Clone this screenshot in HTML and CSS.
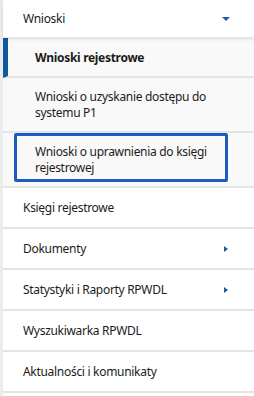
FILE: index.html
```html
<!DOCTYPE html>
<html lang="pl">
<head>
  <meta charset="UTF-8">
  <meta name="viewport" content="width=device-width, initial-scale=1.0">
  <title>Menu</title>
  <link rel="stylesheet" href="styles.css">
</head>
<body>
  <nav class="menu">
    <div class="menu-head">
      <span>Wnioski</span>
      <span class="caret-down"></span>
    </div>
    <ul class="sub-list">
      <li class="sub-item active">Wnioski rejestrowe</li>
      <li class="sub-item">Wnioski o uzyskanie dostępu do systemu P1</li>
      <li class="sub-item focus-row"><a class="focus-link" href="#">Wnioski o uprawnienia do księgi rejestrowej</a></li>
    </ul>
    <ul class="top-list">
      <li class="top-item">Księgi rejestrowe</li>
      <li class="top-item">Dokumenty <span class="caret-right"></span></li>
      <li class="top-item">Statystyki i Raporty RPWDL <span class="caret-right"></span></li>
      <li class="top-item">Wyszukiwarka RPWDL</li>
      <li class="top-item">Aktualności i komunikaty</li>
    </ul>
  </nav>
</body>
</html>
```

FILE: styles.css
```css
body {
  margin: 0;
  font-family: "Noto Sans", Arial, sans-serif;
  font-size: 12px;
  letter-spacing: -0.3px;
  color: #1b1b1b;
  background: #fff;
}
ul {
  list-style: none;
  margin: 0;
  padding: 0;
}
.menu {
  width: 251px;
  border-left: 3px solid #ececec;
  min-height: 396px;
}
.menu-head {
  height: 37px;
  display: flex;
  align-items: center;
  justify-content: space-between;
  padding: 0 24px 0 20px;
  background: #fff;
  box-shadow: 0 2px 3px rgba(0, 0, 0, 0.12);
  position: relative;
}
.caret-down {
  width: 0;
  height: 0;
  border-left: 4px solid transparent;
  border-right: 4px solid transparent;
  border-top: 4px solid #1a5ca8;
  margin-top: 1px;
}
.caret-right {
  width: 0;
  height: 0;
  border-top: 3.5px solid transparent;
  border-bottom: 3.5px solid transparent;
  border-left: 4px solid #1a5ca8;
}
.sub-list {
  background: #f9f9f9;
}
.sub-item {
  padding: 11px 20px 10px 32px;
  line-height: 16px;
  border-bottom: 2px solid #e4e4e4;
}
.sub-item.active {
  height: 40px;
  box-sizing: border-box;
  padding: 12px 20px 12px 27px;
  border-left: 5px solid #0e5a9c;
  font-weight: bold;
  margin-top: 1px;
}
.sub-item.focus-row {
  padding: 0 26px 4px 11px;
}
.focus-link {
  display: block;
  color: #1b1b1b;
  text-decoration: none;
  border: 3px solid #1e5bbf;
  border-radius: 2px;
  padding: 8px 12px 3px 18px;
}
.top-item {
  height: 39px;
  display: flex;
  align-items: center;
  justify-content: space-between;
  padding: 0 26px 0 20px;
  border-bottom: 2px solid #e4e4e4;
  background: #fff;
}
```
